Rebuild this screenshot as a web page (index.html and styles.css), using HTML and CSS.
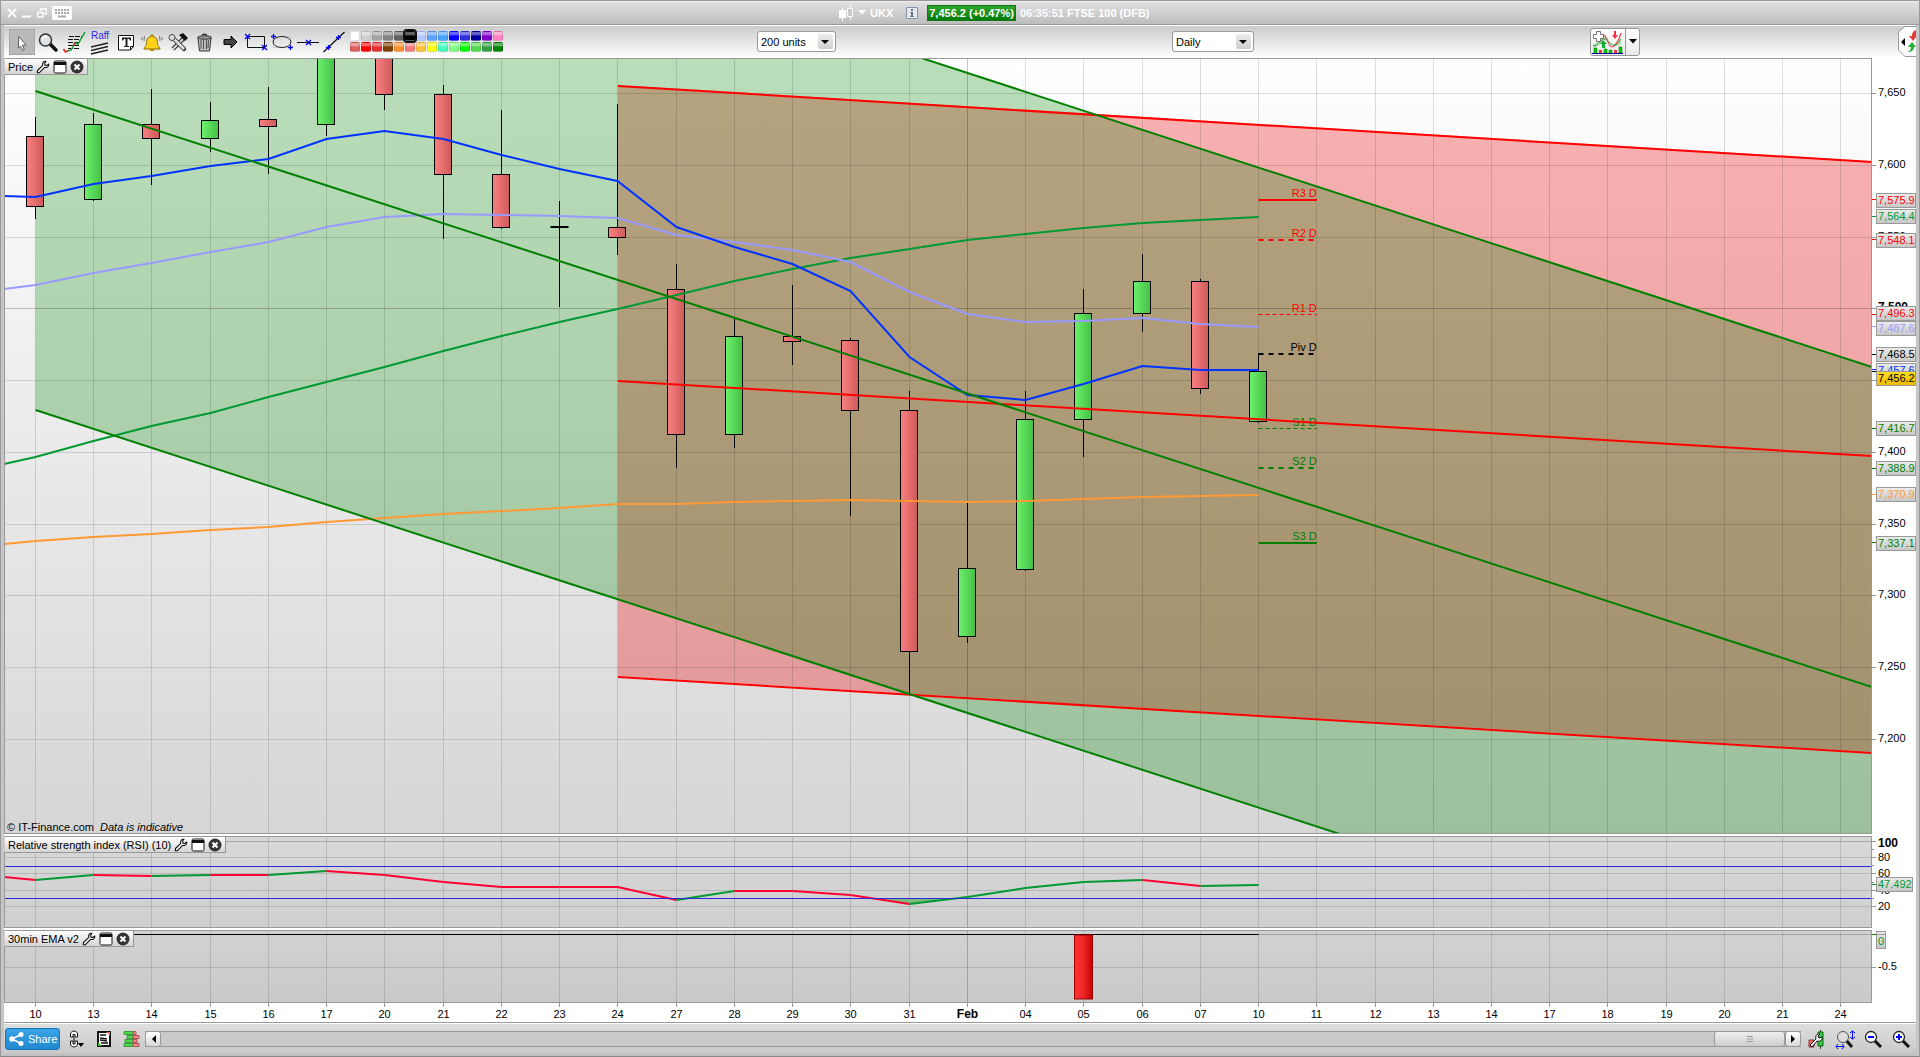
FILE: index.html
```html
<!DOCTYPE html>
<html lang="en">
<head>
<meta charset="utf-8">
<title>UKX - FTSE 100 (DFB)</title>
<link rel="stylesheet" href="styles.css">
</head>
<body>
<svg class="defs" aria-hidden="true">
  <symbol id="i-wrench" viewBox="0 0 14 14"><path d="M1.5 10.5 6.8 5.400C6 3 7.500 1 10 1.200L8.600 3.200l.3 1.900 1.900.3 2-1.400c.2 2.400-1.800 4-4.200 3.400L3.400 12.700H1.300z" fill="#fff" stroke="#111" stroke-width="1.100" stroke-linejoin="round"/></symbol>
  <symbol id="i-window" viewBox="0 0 14 14"><rect x="1" y="1" width="12" height="12" rx="1.500" fill="#fff" stroke="#111"/><path d="M1 2h12v3H1z" fill="#111"/></symbol>
  <symbol id="i-close" viewBox="0 0 14 14"><circle cx="7" cy="7" r="6.500" fill="#333"/><path d="m4.500 4.500 5 5m0-5-5 5" stroke="#fff" stroke-width="2.200"/></symbol>
</svg>

<div class="window">
  <header class="titlebar">
    <div class="window-controls">
      <button aria-label="Close"><svg width="10" height="10" viewBox="0 0 10 10"><path d="m1 1 8 8m0-8-8 8" stroke="#fff" stroke-width="1.800"/></svg></button>
      <button aria-label="Minimise"><svg width="10" height="10" viewBox="0 0 10 10"><path d="M0 8.500h9" stroke="#fff" stroke-width="2"/></svg></button>
      <button aria-label="Restore"><svg width="10" height="10" viewBox="0 0 10 10"><path d="M3.500 3V1h6v5H7M.5 4.500H6V9H.5z" fill="none" stroke="#fff" stroke-width="1.400"/></svg></button>
      <button aria-label="Keyboard"><svg width="20" height="14" viewBox="0 0 20 14"><rect width="20" height="14" rx="2" fill="#fff"/><path d="M3 4h15M3 7h15" stroke="#aaa" stroke-width="2" stroke-dasharray="2 1"/><path d="M6 10.500h8" stroke="#aaa" stroke-width="2"/></svg></button>
    </div>
    <div class="instrument">
      <svg width="15" height="16" viewBox="0 0 15 16"><path d="M3.500 2v14M11.500 0v15" stroke="#fff"/><path d="M0 5h7v8H0z" fill="#fff"/><path d="M8.500 3.500h5v8h-5z" fill="#c9c9c9" stroke="#fff"/></svg>
      <svg class="caret" width="8" height="5" viewBox="0 0 8 5"><path d="M0 0h8L4 4.500z" fill="#fff"/></svg>
      <span class="symbol-name">UKX</span>
      <svg class="info" width="12" height="12" viewBox="0 0 12 12"><path d="M.5.500h11v11H.5z" fill="#e8eaee" stroke="#8595a5"/><path d="M5 2h2v2H5zM4 5h3v4h1v1H4V9h1V6H4z" fill="#667785"/></svg>
      <span class="quote">7,456.2 (+0.47%)</span>
      <span>06:35:51 FTSE 100 (DFB)</span>
    </div>
  </header>

  <div class="toolbar">
    <div class="tools">
      <button class="tool is-active" aria-label="Pointer"><svg viewBox="0 0 26 26"><path d="m9.500 7 8 9.500-4 0 2 4.500-2 1-2-4.500-2.500 2z" fill="#fff" stroke="#555"/></svg></button>
      <button class="tool" aria-label="Zoom"><svg viewBox="0 0 26 26"><path d="m14 14 7 7" stroke="#111" stroke-width="3.500" stroke-linecap="round"/><circle cx="10.500" cy="11" r="6" fill="#dfe3e5" stroke="#333" stroke-width="1.500"/><path d="M7 10c1-2 3-3 5-2" fill="none" stroke="#fff" stroke-width="2"/></svg></button>
      <button class="tool" aria-label="Chart report"><svg viewBox="0 0 26 26"><path d="M8 7.500h13M7 10.500h12M7 13.500h12M7 16.500h12M7 19.500h11" stroke="#111" stroke-dasharray="5 1"/><path d="m6 22 4-1 4-7 3 1 7-12" fill="none" stroke="#22a040" stroke-width="1.500"/><path d="m2.500 20 2 3 2-1m6-6 2-2" fill="none" stroke="#f02020" stroke-width="1.500"/></svg></button>
      <button class="tool raff" aria-label="Raff channel"><span>Raff</span><svg viewBox="0 0 26 14"><path d="m4 6 17-4M4 9.500l17-4M4 13l17-4" stroke="#222" stroke-width="1.300"/></svg></button>
      <button class="tool" aria-label="Text"><svg viewBox="0 0 26 26"><path d="M5.500 6.500h15v11l-3 3.500h-12z" fill="#fff" stroke="#111"/><path d="M20.500 17.500h-3V21" fill="none" stroke="#111"/><path d="M9 8.500h9v3h-1l-1-1.500h-1.500V17H16v1h-5v-1h1.500v-7H11l-1 1.500H9z" fill="#222"/></svg></button>
      <button class="tool" aria-label="Alert"><svg viewBox="0 0 26 26"><path d="M5 19c3-2 2-4 3-8 .6-2 2-3 4-3.300V6h2v1.700c2 .3 3.400 1.300 4 3.300 1 4 0 6 3 8v1H5z" fill="#fcd116" stroke="#8a6a00"/><path d="M11 20h4v2h-4z" fill="#b98a00"/><path d="M5.500 7 5 12M3 8v3M20.500 7l.5 5M23 8v3" stroke="#777"/></svg></button>
      <button class="tool" aria-label="Settings"><svg viewBox="0 0 26 26"><path d="m8 20 11-11" stroke="#222" stroke-width="4"/><path d="m7 21 11-11" stroke="#ddd" stroke-width="2"/><path d="m7 8 12 12" stroke="#444" stroke-width="4.500" stroke-linecap="round"/><path d="m7 8 12 12" stroke="#ddd" stroke-width="2.500"/><circle cx="7" cy="8.500" r="3" fill="#ddd" stroke="#444"/><path d="m14 6 4-2 5 5-3 3z" fill="#111"/></svg></button>
      <button class="tool" aria-label="Delete"><svg viewBox="0 0 26 26"><path d="M7 9h13l-1.500 13h-10z" fill="#bbb" stroke="#333"/><path d="M10 11v9m2.500-9v9m3-9v9m2-9-.5 8" stroke="#555"/><ellipse cx="13.500" cy="8.500" rx="7" ry="1.700" fill="#999" stroke="#333"/><path d="M11 6.500q2.500-2.500 5 0" fill="none" stroke="#333" stroke-width="1.500"/></svg></button>
      <button class="tool" aria-label="Arrow"><svg viewBox="0 0 26 26"><path d="M7 10.500h7V7l6 6-6 6v-3.500H7z" fill="#444" stroke="#000"/></svg></button>
      <button class="tool" aria-label="Rectangle"><svg viewBox="0 0 26 26"><path d="M4.500 7.500h17v11h-17z" fill="none" stroke="#111"/><path class="handle" d="m2 5 5 5m0-5-5 5m17 6 5 5m0-5-5 5"/></svg></button>
      <button class="tool" aria-label="Ellipse"><svg viewBox="0 0 26 26"><path d="M4.500 7.500h17v11h-17z" fill="none" stroke="#ccc"/><ellipse cx="13" cy="13" rx="9" ry="5.500" fill="none" stroke="#222"/><path class="handle" d="M2 7.500h5M4.500 5v5M19 18.500h5m-2.500-2.500v5"/></svg></button>
      <button class="tool" aria-label="Horizontal line"><svg viewBox="0 0 26 26"><path d="M2 13.500h22" stroke="#111"/><path class="handle" d="m11 11 5 5m0-5-5 5"/></svg></button>
      <button class="tool" aria-label="Trend line"><svg viewBox="0 0 26 26"><path d="m2.500 23 21-20" stroke="#111" stroke-width="1.300"/><path class="handle" d="M5 18.500h5M7.500 16v5M15 8.500h5M17.500 6v5"/></svg></button>
      <div class="palette" id="palette" role="group" aria-label="Drawing colour"></div>
    </div>
    <div><label class="picker units"><select aria-label="Units"><option>200 units</option></select></label></div>
    <div><label class="picker frame"><select aria-label="Timeframe"><option>Daily</option></select></label></div>
    <div>
      <div class="indicator">
        <button aria-label="Add indicator"><svg width="32" height="24" viewBox="0 0 32 24"><path d="M1 14c3 0 6-7 11-8 3 0 5 9 9 10 3-1 6-4 8-8v7c-5 2-9 1-12-1-4-4-5-6-8-1-2 3-5 5-8 4z" fill="#bde3bb"/><path d="M11 5c4-1 5 12 9 12 4-1 7-7 9-14" fill="none" stroke="#e04848" stroke-width="1.200"/><path d="M1 16c6 0 8-8 12-7s5 6 9 6 5-3 7-6" fill="none" stroke="#30a040"/><path d="M11 10l-3 4h2v4h3v-4h2z" fill="#12b030"/><path d="M22 1v4h-2l3 4 3-4h-2V1z" fill="#f03040"/><path d="M4.500 1.500h4v3h3v4h-3v3h-4v-3h-3v-4h3z" fill="#fff" stroke="#777"/><path d="M2 18h3v5H2zM12 19h3v4h-3zM17 20h3v3h-3zM27 17h3v6h-3z" fill="#0c0" stroke="#070" stroke-width=".5"/><path d="M7 20h3v3H7zM22 20h3v3h-3z" fill="#e33"/><path d="M0 23.500h31" stroke="#00a"/></svg></button>
        <button class="more" aria-label="More indicators"><svg width="8" height="5" viewBox="0 0 8 5"><path d="M0 0h8L4 4.500z"/></svg></button>
      </div>
    </div>
    <button class="drawer" aria-label="Open order panel"><svg width="18" height="31" viewBox="0 0 18 31"><path d="M18 .5H7L.5 6v18L7 30.500h11" fill="#fff" stroke="#999"/><path d="m7 12-4 4 4 4z"/><path d="M18 4q-4 1-4 6h-3l4 5 3-4z" fill="#e83838"/><path d="m14 16-4 5h3q0 4-4 5 7 0 7-5h2z" fill="#1db32e"/></svg></button>
  </div>

  <main class="charts">
    <section class="pane pane-price">
      <div class="pane-title"><span>Price</span><button aria-label="Price settings"><svg><use href="#i-wrench"/></svg></button><button aria-label="Detach price"><svg><use href="#i-window"/></svg></button><button aria-label="Close price"><svg><use href="#i-close"/></svg></button></div>
      <svg class="plot" id="price"></svg>
      <p class="credit">© IT-Finance.com <em>Data is indicative</em></p>
    </section>
    <section class="pane pane-rsi">
      <div class="pane-title"><span>Relative strength index (RSI) (10)</span><button aria-label="RSI settings"><svg><use href="#i-wrench"/></svg></button><button aria-label="Detach RSI"><svg><use href="#i-window"/></svg></button><button aria-label="Close RSI"><svg><use href="#i-close"/></svg></button></div>
      <svg class="plot" id="rsi"></svg>
    </section>
    <section class="pane pane-ema">
      <div class="pane-title"><span>30min EMA v2</span><button aria-label="EMA settings"><svg><use href="#i-wrench"/></svg></button><button aria-label="Detach EMA"><svg><use href="#i-window"/></svg></button><button aria-label="Close EMA"><svg><use href="#i-close"/></svg></button></div>
      <svg class="plot" id="ema"></svg>
    </section>
    <svg class="dates" id="dates"></svg>
  </main>

  <footer class="bottombar">
    <button class="share"><svg width="15" height="14" viewBox="0 0 15 14"><path d="M12 2.500 3 7l9 4.500" fill="none" stroke="#fff" stroke-width="1.500"/><circle cx="12" cy="2.500" r="2.500" fill="#fff"/><circle cx="3" cy="7" r="2.700" fill="#fff"/><circle cx="12" cy="11.500" r="2.500" fill="#fff"/></svg>Share</button>
    <div class="shortcuts">
      <button aria-label="Link charts"><svg width="16" height="18" viewBox="0 0 16 18"><path d="M1.500 7V3q3.500-4 7 0v4H6V4.500H4V7zM1.500 11v4q3.500 4 7 0v-4H6v3H4v-3zM5 6v6" fill="#fff" stroke="#111"/><path d="M9 13h6l-3 4z"/></svg></button>
      <button aria-label="Order list"><svg width="16" height="18" viewBox="0 0 16 18"><path d="M2 2h12v14H2z" fill="#fff" stroke="#111" stroke-width="2"/><path d="M4 5h6M4 8l7 1M4 10l7 1M5 13h7" stroke="#111" stroke-width="1.400"/><path d="M10 2h4v4z" fill="#e77"/><path d="M2 12v4h4z" fill="#3b3"/></svg></button>
      <button aria-label="Order book"><svg width="17" height="18" viewBox="0 0 17 18"><path d="M1 1.500h9v3H1zM4 5.500h6v3H4zM2 9.500h8v3H2zM1 13.500h9v3H1z" fill="#4d4" stroke="#494"/><path d="M10 1.500h3v3h-3zM10 5.500h6v3h-6zM10 9.500h4v3h-4zM10 13.500h6v3h-6z" fill="#f88" stroke="#a55"/></svg></button>
    </div>
    <div class="scrollbar">
      <button aria-label="Scroll left"><svg width="5" height="8" viewBox="0 0 5 8"><path d="M5 0v8L1 4z"/></svg></button>
      <div class="track"><div class="thumb"><svg width="6" height="6" viewBox="0 0 6 6"><path d="M0 .5h6M0 3h6M0 5.500h6" stroke="#999"/></svg></div></div>
      <button aria-label="Scroll right"><svg width="5" height="8" viewBox="0 0 5 8"><path d="M0 0v8l4-4z"/></svg></button>
    </div>
    <div class="zooms">
      <button aria-label="Chart style"><svg width="20" height="20" viewBox="0 0 20 20"><path d="M13.500 1v19" stroke="#333"/><path d="M11 3h5v14h-5z" fill="#3c4" stroke="#161"/><path d="M2 11h5v7H2z" fill="#f66" stroke="#833"/><path d="M3 16 9 10C8 7 10 4 13 5l-2 2 1 2 3-1c1 3-2 5-5 4l-5 6z" fill="#fff" stroke="#111"/></svg></button>
      <button aria-label="Fit"><svg width="20" height="20" viewBox="0 0 20 20"><path d="m11 11 6 7" stroke="#111" stroke-width="3"/><circle cx="8" cy="8" r="5.500" fill="#ddd" stroke="#555"/><path d="M1 17.500h8M3 15l-2 2.500L3 20m4-5 2 2.500L7 20M17.500 2v8M15 4l2.500-2L20 4m-5 4 2.500 2L20 8" fill="none" stroke="#00f"/></svg></button>
      <button aria-label="Zoom out"><svg width="20" height="20" viewBox="0 0 20 20"><path d="m12 12 6 6" stroke="#111" stroke-width="3"/><circle cx="8" cy="8" r="5.500" fill="#fff" stroke="#222" stroke-width="1.300"/><path d="M5 8h6" stroke="#00f" stroke-width="2"/></svg></button>
      <button aria-label="Zoom in"><svg width="20" height="20" viewBox="0 0 20 20"><path d="m12 12 6 6" stroke="#111" stroke-width="3"/><circle cx="8" cy="8" r="5.500" fill="#fff" stroke="#222" stroke-width="1.300"/><path d="M5 8h6M8 5v6" stroke="#00f" stroke-width="2"/></svg></button>
    </div>
  </footer>
</div>
<script src="chart.js"></script>
</body>
</html>
```
FILE: styles.css
```css
* { box-sizing: border-box; }

body {
  margin: 0;
  font-family: "Liberation Sans", Arial, sans-serif;
  font-size: 11px;
  line-height: 14px;
  color: #000;
  background: #fff;
}

button {
  margin: 0;
  padding: 0;
  border: 0;
  background: none;
  font: inherit;
  color: inherit;
}

svg { display: block; }
.defs { position: absolute; width: 0; height: 0; }

.window {
  display: flex;
  flex-direction: column;
  min-height: 100vh;
  border: 1px solid #999;
  border-bottom-color: #888;
  background: #c6c6c6;
}

/* title bar */
.titlebar {
  display: grid;
  grid-template-columns: 835fr 1077fr;
  align-items: center;
  height: 24px;
  padding: 0 3px;
  border-bottom: 1px solid #999;
  background: linear-gradient(#f0f0f0 0, #dedede 2px, #bdbdbd 100%);
}
.window-controls { display: flex; align-items: center; gap: 5px; padding-left: 3px; }
.instrument {
  display: flex;
  align-items: center;
  color: #fff;
  font-weight: bold;
}
.caret { margin: 0 4px; }
.symbol-name { margin-right: 13px; }
.info { margin-right: 9px; }
.quote {
  margin-right: 4px;
  padding: 0 1px;
  border: 1px solid #0a7a10;
  background: linear-gradient(#2fa42f, #067a06);
}

/* drawing toolbar */
.toolbar {
  display: grid;
  grid-template-columns: 753fr 415fr 418fr 308fr 18px;
  align-items: center;
  height: 33px;
  margin: 0 3px;
  padding-bottom: 1px;
  border-top: 1px solid #fff;
  background: linear-gradient(#cbcbcb, #fff);
}
.tools { display: flex; align-items: center; padding-left: 5px; }
.tool { flex: none; width: 26px; height: 26px; }
.tool svg { width: 26px; height: 26px; }
.is-active { background: #b9b9b9; border: 1px solid #a6a6a6; }
.is-active svg { width: 24px; height: 24px; }
.raff { text-align: center; }
.raff span { display: block; height: 12px; line-height: 14px; color: #1a2de0; font-size: 10px; }
.raff svg { height: 14px; }
.handle { fill: none; stroke: #00f; stroke-width: 1.300; }

.palette { display: grid; grid-template-columns: repeat(14, 10px); gap: 1px; margin-left: 3px; }
.swatch {
  height: 10px;
  border-radius: 2px;
  border: 1px solid rgba(0, 0, 0, .12);
  background-image: linear-gradient(rgba(255, 255, 255, .4) 30%, transparent 50%);
}
.swatch.is-picked { outline: 2px solid #111; z-index: 1; }

.picker { position: relative; display: block; height: 21px; }
.units { width: 79px; }
.frame { width: 82px; }
.picker select {
  appearance: none;
  width: 100%;
  height: 100%;
  margin: 0;
  padding: 0 20px 0 3px;
  border: 1px solid #999;
  border-radius: 3px;
  background: #fff;
  font: inherit;
}
.picker::before {
  content: "";
  position: absolute;
  right: 3px;
  top: 3px;
  width: 15px;
  height: 15px;
  border-radius: 2px;
  background: linear-gradient(#ececec, #cfcfcf);
}
.picker::after {
  content: "";
  position: absolute;
  right: 7px;
  top: 9px;
  border: 4px solid transparent;
  border-top-color: #000;
  border-bottom: 0;
}

.indicator {
  display: flex;
  width: 50px;
  height: 28px;
  border: 1px solid #999;
  border-radius: 3px;
  background: linear-gradient(#fff, #eaeaea);
}
.indicator button { width: 34px; padding: 1px; }
.indicator .more { width: 14px; padding-left: 3px; border-left: 1px solid #999; }

/* charts */
.charts {
  flex: 1;
  display: flex;
  flex-direction: column;
  gap: 2px;
  margin: 0 3px;
  background: #fff;
}
.pane { position: relative; display: flex; }
.pane-price { flex: 1; min-height: 300px; }
.pane-rsi { height: 92px; }
.pane-ema { height: 73px; }
.plot { flex: 1; width: 100%; height: 100%; }
.pane-price .plot { position: absolute; inset: 0; }
.dates { width: 100%; height: 20px; margin-top: -2px; border-bottom: 1px solid #999; }

.pane-title {
  position: absolute;
  z-index: 1;
  left: 0;
  top: 0;
  display: flex;
  align-items: center;
  gap: 3px;
  height: 17px;
  padding: 0 3px;
  border: 1px solid #999;
  border-left-color: #ccc;
  background: linear-gradient(#fff, #d4d4d4);
}
.pane-title button, .pane-title svg { width: 14px; height: 14px; }
.credit { position: absolute; left: 3px; bottom: 0; margin: 0; }
.credit em { margin-left: 3px; }

/* scale labels */
.plot text, .dates text { font-size: 11px; }
.plot .strong, .dates .strong { font-size: 12px; font-weight: bold; }
.grid { stroke: rgba(0, 0, 0, .13); }
.grid-major { stroke: rgba(0, 0, 0, .22); }
.frame-line { fill: none; stroke: #999; }

/* bottom bar */
.bottombar {
  display: flex;
  align-items: center;
  height: 33px;
  margin: 0 3px;
  padding: 0 5px 2px 1px;
  border-top: 1px solid #fff;
  background: linear-gradient(#dedede, #cacaca 28px, #bdbdbd);
}
.share {
  display: flex;
  align-items: center;
  gap: 4px;
  width: 55px;
  height: 22px;
  padding-left: 3px;
  border: 1px solid #1877b8;
  border-radius: 3px;
  background: linear-gradient(#38a3e6, #2288cf);
  color: #fff;
}
.shortcuts { display: flex; gap: 11px; padding: 0 5px 0 9px; }
.scrollbar { flex: 1; display: flex; height: 16px; border: 1px solid #999; border-width: 1px 0; }
.scrollbar button {
  display: grid;
  place-items: center;
  width: 16px;
  height: 16px;
  margin-top: -1px;
  border: 1px solid #999;
  border-radius: 3px;
  background: linear-gradient(#fff, #d8d8d8);
}
.track { flex: 1; display: flex; justify-content: flex-end; background: #cacaca; }
.thumb {
  display: grid;
  place-items: center;
  width: 71px;
  height: 16px;
  margin-top: -1px;
  border: 1px solid #999;
  border-radius: 3px;
  background: linear-gradient(#efefef, #cdcdcd);
}
.zooms { display: flex; gap: 8px; padding-left: 6px; }
```
FILE: chart.js
```js
const NS = 'http://www.w3.org/2000/svg';
const DESIGN_W = 1868, PRICE_H = 776, AXIS_W = 44;
const GREEN = '#008000', RED = '#ff0000';

const days = ['10','13','14','15','16','17','20','21','22','23','24','27','28','29','30','31','Feb',
  '04','05','06','07','10','11','12','13','14','17','18','19','20','21','24'];

// high, body top, body bottom, low, direction
const candles = [
  [59,78,148,161,'d'],[55,66,141,143,'u'],[31,66,80,127,'d'],[44,62,80,94,'u'],[29,61,68,116,'d'],
  [-20,-20,66,78,'u'],[-20,-20,36,52,'d'],[27,36,116,181,'d'],[52,116,169,171,'d'],[143,168,169,249,'n'],
  [46,169,179,197,'d'],[206,231,376,410,'d'],[260,278,376,390,'u'],[227,278,283,307,'d'],[280,282,352,458,'d'],
  [333,352,593,636,'d'],[443,510,578,585,'u'],[333,361,511,513,'u'],[231,255,361,399,'u'],[196,223,255,274,'u'],
  [221,223,330,336,'d'],[295,313,363,365,'u']
];

// first value sits on the left edge, the others on successive days
const averages = {
  '#009933': [405,398,382,367,354,338,323,308,292,277,263,250,236,222,210,199,190,181,175,169,164,161,158],
  '#ff9933': [485,482,478,475,471,468,463,459,455,452,449,445,445,443,442,441,442,443,442,440,438,437,436],
  '#9999ff': [230,226,214,204,193,183,168,158,155,156,157,159,176,183,191,203,233,255,263,262,259,265,268],
  '#0033ff': [137,138,125,117,107,100,80,72,80,96,110,122,168,188,205,232,298,336,341,325,307,311,311]
};
const rsi = [40,43,38,39,38,38,34,38,45,50,50,50,63,54,54,58,67,60,51,45,43,49,48];
const rsiRising = [0,1,0,1,0,1,0,0,0,0,0,0,1,0,0,0,1,1,1,1,0,1];

const pivots = [
  ['R3 D',7575.9,RED,2,''],['R2 D',7548.1,RED,2,'5 5'],['R1 D',7496.3,RED,1,'4 3'],['Piv D',7468.5,'#000',2,'5 5'],
  ['S1 D',7416.7,GREEN,1,'4 3'],['S2 D',7388.9,GREEN,2,'5 5'],['S3 D',7337.1,GREEN,2,'']
];

// price, colour, shift of the tag that keeps neighbours readable
const tags = [
  [7575.9,RED,0],[7564.4,'#009933',0],[7548.1,RED,0],[7496.3,RED,-1],[7487.6,'#9999ff',1],[7468.5,'#000',0],
  [7457.6,'#0033ff',0],[7456.2,'#000',6],[7416.7,GREEN,0],[7388.9,GREEN,0],[7370.9,'#ff9933',0],[7337.1,GREEN,0]
];

function add(parent, name, attrs, text) {
  const node = document.createElementNS(NS, name);
  for (const key in attrs) node.setAttribute(key, attrs[key]);
  if (text !== undefined) node.textContent = text;
  parent.appendChild(node);
  return node;
}
const snap = v => Math.floor(v) + 0.5;
const dayX = (i, sx) => (31.5 + 58.24 * i) * sx;
const line = (p, x1, y1, x2, y2, attrs) => add(p, 'line', Object.assign({ x1, y1, x2, y2 }, attrs));
const money = v => v.toLocaleString('en-US', v % 1 ? { minimumFractionDigits: 1 } : {});

function gradient(defs, id, stops, horizontal) {
  const g = add(defs, 'linearGradient', horizontal ? { id } : { id, x2: 0, y2: 1 });
  stops.forEach((c, i) => add(g, 'stop', { offset: i / (stops.length - 1), 'stop-color': c }));
}

function begin(id, top, bottom) {
  const svg = document.getElementById(id);
  svg.replaceChildren();
  const box = svg.getBoundingClientRect();
  const w = Math.round(box.width) - AXIS_W, h = Math.round(box.height);
  const defs = add(svg, 'defs', {});
  gradient(defs, id + '-bg', [top, bottom]);
  const clip = add(defs, 'clipPath', { id: id + '-clip' });
  add(clip, 'rect', { width: w, height: h });
  add(svg, 'rect', { width: w, height: h, fill: `url(#${id}-bg)` });
  const body = add(svg, 'g', { 'clip-path': `url(#${id}-clip)` });
  return { svg, defs, body, w, h, x: i => dayX(i, w / DESIGN_W) };
}
function columns(c) {
  days.forEach((d, i) => line(c.body, snap(c.x(i)), 0, snap(c.x(i)), c.h, { class: d === 'Feb' ? 'grid-major' : 'grid' }));
}
function frame(c) {
  add(c.svg, 'rect', { x: 0.5, y: 0.5, width: c.w - 1, height: c.h - 1, class: 'frame-line' });
}
function tag(c, y, tickY, label, colour, width, fill) {
  line(c.svg, c.w, tickY, c.w + 4, tickY, { stroke: colour });
  add(c.svg, 'rect', { x: c.w + 4.5, y: Math.round(y) - 6.5, width, height: 14, fill: fill || 'url(#tag-bg)', stroke: '#999' });
  add(c.svg, 'text', { x: c.w + 6, y: Math.round(y) + 4, fill: colour }, label);
}

function drawPrice() {
  const c = begin('price', '#ffffff', '#d6d6d6');
  const sy = c.h / PRICE_H;
  const py = p => (35.6 + (7650 - p) * 1.435) * sy;
  gradient(c.defs, 'up', ['#6cf26c', '#45bf45'], true);
  gradient(c.defs, 'down', ['#f88080', '#cf5a5a'], true);
  gradient(c.defs, 'tag-bg', ['#ececec', '#c6c6c6']);
  gradient(c.defs, 'tag-last', ['#ffe020', '#f2b800']);
  const right = c.w, x0 = c.x(0), x10 = c.x(10);

  const poly = (pts, fill) => add(c.body, 'polygon', { points: pts.map(p => [p[0], p[1] * sy].join()).join(' '), fill });
  poly([[x10, 27], [right, 103], [right, 694], [x10, 618]], 'rgba(238,0,0,.3)');
  poly([[x0, -288], [right, 309], [right, 949], [x0, 352]], 'rgba(0,130,0,.27)');

  columns(c);
  for (let p = 7650; p >= 7200; p -= 50) {
    const y = snap(py(p));
    line(c.body, 0, y, c.w, y, { class: p === 7500 ? 'grid-major' : 'grid' });
    line(c.svg, c.w, y, c.w + 4, y, { class: 'frame-line' });
    add(c.svg, 'text', { x: c.w + 6, y: y + 2.5, class: p === 7500 ? 'strong' : '' }, money(p));
  }

  candles.forEach(([hi, top, bot, lo, dir], i) => {
    const x = snap(c.x(i));
    line(c.body, x, hi * sy, x, lo * sy, { stroke: '#000' });
    if (dir === 'n') line(c.body, x - 9, top * sy + 1, x + 9, top * sy + 1, { stroke: '#000', 'stroke-width': 2 });
    else add(c.body, 'rect', { x: x - 9, y: snap(top * sy), width: 17, height: Math.round((bot - top) * sy), fill: `url(#${dir === 'u' ? 'up' : 'down'})`, stroke: '#000' });
  });

  for (const colour in averages) {
    const pts = averages[colour].map((v, i) => [i ? snap(c.x(i - 1)) : 0, (v + 1) * sy].join()).join(' ');
    add(c.body, 'polyline', { points: pts, fill: 'none', stroke: colour, 'stroke-width': 2 });
  }

  const px = c.x(21), pe = c.x(22);
  pivots.forEach(([name, price, colour, width, dash]) => {
    const y = width === 1 ? snap(py(price)) : Math.round(py(price));
    line(c.body, px, y, pe, y, { stroke: colour, 'stroke-width': width, 'stroke-dasharray': dash || 'none' });
    add(c.body, 'text', { x: pe, y: Math.round(y) - 3, fill: colour, 'text-anchor': 'end' }, name);
  });

  [[28, 104], [323, 398], [619, 695]].forEach(([a, b]) => line(c.body, x10, a * sy, right, b * sy, { stroke: RED, 'stroke-width': 2 }));
  [[-288, 309], [33, 629], [352, 949]].forEach(([a, b]) => line(c.body, x0, a * sy, right, b * sy, { stroke: GREEN, 'stroke-width': 2 }));

  frame(c);
  tags.forEach(([p, colour, shift]) => tag(c, py(p) + shift, snap(py(p)), money(p), colour, 39, p === 7456.2 ? 'url(#tag-last)' : ''));
}

function drawRsi() {
  const c = begin('rsi', '#d8d8d8', '#cfcfcf');
  columns(c);
  const ry = v => snap(5 + (100 - v) * .82);
  [100, 80, 60, 40, 20].forEach(v => {
    const y = ry(v);
    line(c.body, 0, y, c.w, y, { class: v === 100 ? 'grid-major' : 'grid' });
    line(c.svg, c.w, y, c.w + 4, y, { class: 'frame-line' });
    if (v < 100) line(c.svg, c.w, ry(v + 10), c.w + 2, ry(v + 10), { class: 'frame-line' });
    add(c.svg, 'text', { x: c.w + 6, y: v === 100 ? y + 5 : y + 3, class: v === 100 ? 'strong' : '' }, v);
  });
  const at = i => i ? snap(c.x(i - 1)) : 0;
  add(c.body, 'polygon', { points: `${at(15.400)},62.500 ${at(16)},67.500 ${at(16.700)},62.500`, fill: '#7cb87c' });
  rsi.slice(1).forEach((v, i) => line(c.body, at(i), rsi[i] + 1, at(i + 1), v + 1, { stroke: rsiRising[i] ? '#009933' : '#ff0033', 'stroke-width': 2 }));
  [30.5, 62.5].forEach(y => line(c.body, 0, y, c.w, y, { stroke: '#2a2ae0' }));
  frame(c);
  tag(c, 48, 48.5, '47.492', '#009933', 36);
}

function drawEma() {
  const c = begin('ema', '#d1d1d1', '#cacaca');
  columns(c);
  gradient(c.defs, 'bar', ['#ff3030', '#ec2626', '#c80000'], true);
  line(c.body, 0, 4.5, c.w, 4.5, { class: 'grid-major' });
  line(c.body, 0, 37.5, c.w, 37.5, { class: 'grid' });
  line(c.svg, c.w, 37.5, c.w + 4, 37.5, { class: 'frame-line' });
  add(c.svg, 'text', { x: c.w + 6, y: 40 }, '-0.5');
  line(c.body, 0, 4.5, c.x(21), 4.5, { stroke: '#000' });
  add(c.body, 'rect', { x: snap(c.x(18)) - 9, y: 5, width: 18, height: 64, fill: 'url(#bar)', stroke: '#900' });
  frame(c);
  line(c.svg, c.w, 4.5, c.w + 4, 4.5, { stroke: GREEN });
  add(c.svg, 'rect', { x: c.w + 4.5, y: 1.5, width: 9, height: 17, fill: 'url(#tag-bg)', stroke: '#999' });
  line(c.svg, c.w + 5, 4.5, c.w + 13, 4.5, { class: 'frame-line' });
  add(c.svg, 'text', { x: c.w + 6, y: 15, fill: '#009933' }, '0');
}

function drawDates() {
  const svg = document.getElementById('dates');
  svg.replaceChildren();
  const sx = (Math.round(svg.getBoundingClientRect().width) - AXIS_W) / DESIGN_W;
  days.forEach((d, i) => {
    const x = snap(dayX(i, sx));
    line(svg, x, 0, x, 4, { class: 'frame-line' });
    add(svg, 'text', { x, y: 15, 'text-anchor': 'middle', class: d === 'Feb' ? 'strong' : '' }, d);
  });
}

const swatches = ['#ffffff','#d0d0d0','#a4a4a4','#848484','#606060','#000000','#b0c8ff','#60a0ff','#48a4ff','#0000ff','#3030e0','#0000a0','#8000c8','#ff80c0',
  '#e06060','#ff0000','#e83030','#804000','#ff9030','#f47c7c','#ffc040','#ffff00','#40ffc0','#80ff80','#00ff00','#50d850','#30a040','#008000'];
swatches.forEach(colour => {
  const b = document.createElement('button');
  b.className = 'swatch' + (colour === '#000000' ? ' is-picked' : '');
  b.style.backgroundColor = colour;
  b.setAttribute('aria-label', colour);
  document.getElementById('palette').appendChild(b);
});

function draw() { drawPrice(); drawRsi(); drawEma(); drawDates(); }
draw();
window.addEventListener('resize', draw);
```
